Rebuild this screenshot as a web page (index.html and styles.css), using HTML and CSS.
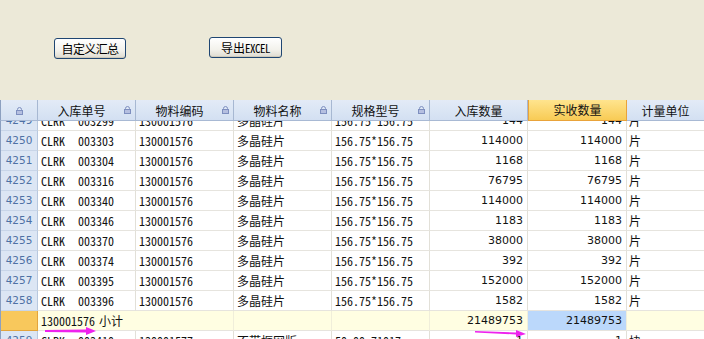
FILE: index.html
```html
<!DOCTYPE html>
<html lang="zh">
<head>
<meta charset="utf-8">
<link rel="stylesheet" href="styles.css">
</head>
<body>
<div class="page">
  <div class="toolbar">
    <button class="btn btn-sum">自定义汇总</button>
    <button class="btn btn-export">导出<span class="mono">EXCEL</span></button>
  </div>
  <div class="grid-wrap">
    <div class="grid head">
      <div class="hc rn"><svg class="lock" viewBox="0 0 7 8"><path d="M1.5 4V2.5a2 2 0 0 1 4 0V4" fill="none" stroke="#7E8FBF" stroke-width="1"/><rect x="0.5" y="3.5" width="6" height="4" fill="#B5BFE0" stroke="#7E8FBF"/></svg></div>
      <div class="hc lk"><span>入库单号</span><svg class="lock" viewBox="0 0 7 8"><path d="M1.5 4V2.5a2 2 0 0 1 4 0V4" fill="none" stroke="#7E8FBF" stroke-width="1"/><rect x="0.5" y="3.5" width="6" height="4" fill="#B5BFE0" stroke="#7E8FBF"/></svg></div>
      <div class="hc lk"><span>物料编码</span><svg class="lock" viewBox="0 0 7 8"><path d="M1.5 4V2.5a2 2 0 0 1 4 0V4" fill="none" stroke="#7E8FBF" stroke-width="1"/><rect x="0.5" y="3.5" width="6" height="4" fill="#B5BFE0" stroke="#7E8FBF"/></svg></div>
      <div class="hc lk"><span>物料名称</span><svg class="lock" viewBox="0 0 7 8"><path d="M1.5 4V2.5a2 2 0 0 1 4 0V4" fill="none" stroke="#7E8FBF" stroke-width="1"/><rect x="0.5" y="3.5" width="6" height="4" fill="#B5BFE0" stroke="#7E8FBF"/></svg></div>
      <div class="hc lk"><span>规格型号</span><svg class="lock" viewBox="0 0 7 8"><path d="M1.5 4V2.5a2 2 0 0 1 4 0V4" fill="none" stroke="#7E8FBF" stroke-width="1"/><rect x="0.5" y="3.5" width="6" height="4" fill="#B5BFE0" stroke="#7E8FBF"/></svg></div>
      <div class="hc"><span>入库数量</span></div>
      <div class="hc hot"><span>实收数量</span></div>
      <div class="hc"><span>计量单位</span></div>
    </div>
    <div class="body">
      <div class="grid rows" id="rows"></div>
    </div>
    <svg class="arrows" width="704" height="339" viewBox="0 0 704 339">
      <path d="M45 330 L86 329.5 L86 327 L96 331 L86 335 L86 332.5 L45 332 Z" fill="#EE22EE"/>
      <path d="M475 331 L516 332.5 L516 330 L526 334 L516 337 L516 334.5 L475 332.5 Z" fill="#EE22EE"/>
    </svg>
  </div>
</div>
<script src="app.js"></script>
</body>
</html>
```
FILE: app.js
```js
const data = [
  ["4249","CLRK","003299","130001576","多晶硅片","156.75*156.75","144","144","片"],
  ["4250","CLRK","003303","130001576","多晶硅片","156.75*156.75","114000","114000","片"],
  ["4251","CLRK","003304","130001576","多晶硅片","156.75*156.75","1168","1168","片"],
  ["4252","CLRK","003316","130001576","多晶硅片","156.75*156.75","76795","76795","片"],
  ["4253","CLRK","003340","130001576","多晶硅片","156.75*156.75","114000","114000","片"],
  ["4254","CLRK","003346","130001576","多晶硅片","156.75*156.75","1183","1183","片"],
  ["4255","CLRK","003370","130001576","多晶硅片","156.75*156.75","38000","38000","片"],
  ["4256","CLRK","003374","130001576","多晶硅片","156.75*156.75","392","392","片"],
  ["4257","CLRK","003395","130001576","多晶硅片","156.75*156.75","152000","152000","片"],
  ["4258","CLRK","003396","130001576","多晶硅片","156.75*156.75","1582","1582","片"],
  null,
  ["4259","CLRK","003410","130001577","不带框网版","50.00.71017","1","1","块"]
];
const root = document.getElementById("rows");
function cell(cls, text) {
  const d = document.createElement("div");
  d.className = "c " + cls;
  d.textContent = text;
  root.appendChild(d);
  return d;
}
for (const r of data) {
  if (!r) {
    cell("rn sumrn", "");
    const s = cell("sum code span2", "");
    s.innerHTML = '<span class="mono">130001576</span><span class="sgap"></span>小计';
    cell("sum", "");
    cell("sum", "");
    cell("sum num", "21489753");
    cell("sum num sel", "21489753");
    cell("sum", "");
    continue;
  }
  cell("rn", r[0]);
  const c = cell("mono", "");
  c.innerHTML = r[1] + '<span class="gap"></span>' + r[2];
  cell("mono", r[3]);
  cell("cn", r[4]);
  cell("mono", r[5]);
  cell("num", r[6]);
  cell("num", r[7]);
  cell("cn unit", r[8]);
}
```
FILE: styles.css
```css
html, body {
  margin: 0;
  padding: 0;
}
body {
  width: 704px;
  height: 339px;
  overflow: hidden;
  background: #ECE9D8;
  font-family: "Noto Sans CJK SC", sans-serif;
  font-size: 12px;
  color: #000;
}
.page {
  display: flex;
  flex-direction: column;
  height: 339px;
}
.toolbar {
  height: 100px;
  display: flex;
  align-items: flex-start;
  padding-left: 54px;
  box-sizing: border-box;
}
.btn {
  height: 21px;
  padding: 0;
  border: 1px solid #1F4672;
  border-radius: 3px;
  background: linear-gradient(#FFFFFF, #F3F2EC 60%, #DEDBD0);
  font-family: "Noto Sans CJK SC", sans-serif;
  font-size: 12px;
  line-height: 18px;
  color: #000;
  box-shadow: inset 0 -1px 0 #CFCABA;
}
.btn-sum {
  width: 72px;
  margin-top: 38px;
  letter-spacing: -0.6px;
}
.btn-export {
  width: 73px;
  margin-top: 37px;
  margin-left: 83px;
}
.mono {
  font-family: "Noto Sans Mono CJK SC", "Liberation Mono", monospace;
}
.btn .mono {
  font-size: 11px;
  letter-spacing: -0.5px;
}
.grid-wrap {
  position: relative;
  flex: 1;
  overflow: hidden;
  background: #fff;
}
.grid {
  display: grid;
  grid-template-columns: 37px 98px 98px 98px 98px 98px 99px 78px;
}
.head {
  height: 21px;
  background: linear-gradient(#E3EBF7, #D3E0F2);
  border-bottom: 1px solid #A8B9D4;
  box-sizing: border-box;
  border-left: 1px solid #8CA0C0;
}
.hc {
  display: flex;
  align-items: center;
  justify-content: center;
  border-right: 1px solid #A7B8D2;
  color: #111;
  font-size: 12px;
  line-height: 20px;
  position: relative;
}
.hc.lk span {
  margin-right: 10px;
}
.hc .lock {
  width: 7px;
  height: 8px;
}
.hc.lk .lock {
  position: absolute;
  right: 4px;
  top: 6px;
}
.hc.hot {
  background: linear-gradient(#FFE48E, #F8CB55);
  border: 1px solid #E9A33A;
  border-top: none;
}
.hc.rn {
  background: transparent;
}
.body {
  height: 218px;
  overflow: hidden;
}
.rows {
  margin-top: -10px;
  grid-auto-rows: 20px;
  border-left: 1px solid #8CA0C0;
}
.c {
  box-sizing: border-box;
  border-right: 1px solid #E2E0D8;
  border-bottom: 1px solid #E6E4DE;
  padding: 0 3px;
  line-height: 19px;
  white-space: nowrap;
  overflow: hidden;
  font-size: 12px;
  color: #111;
}
.c.rn {
  background: #DCE6F4;
  border-right: 1px solid #B8C8DE;
  border-bottom: 1px solid #C8D5E8;
  text-align: center;
  color: #4E71A4;
  font-family: "DejaVu Sans", sans-serif;
  font-size: 10.5px;
}
.gap {
  display: inline-block;
  width: 13px;
}
.sgap {
  display: inline-block;
  width: 4px;
}
.c.cn {
  font-family: "Noto Sans CJK SC", sans-serif;
}
.c.unit {
  padding-left: 2px;
}
.c.num {
  text-align: right;
  font-family: "DejaVu Sans", sans-serif;
  font-size: 11px;
  padding-right: 4px;
}
.c.sumrn {
  background: #F8C85C;
  border-right: 1px solid #E3A43C;
  border-bottom: 1px solid #E3A43C;
}
.c.sum {
  background: #FFFEE2;
  border-right: 1px solid #F0EEDA;
}
.c.span2 {
  grid-column: span 2;
}
.c.sel {
  background: #BBD8FB;
}
.arrows {
  position: absolute;
  left: 0;
  top: -100px;
  pointer-events: none;
}
```
